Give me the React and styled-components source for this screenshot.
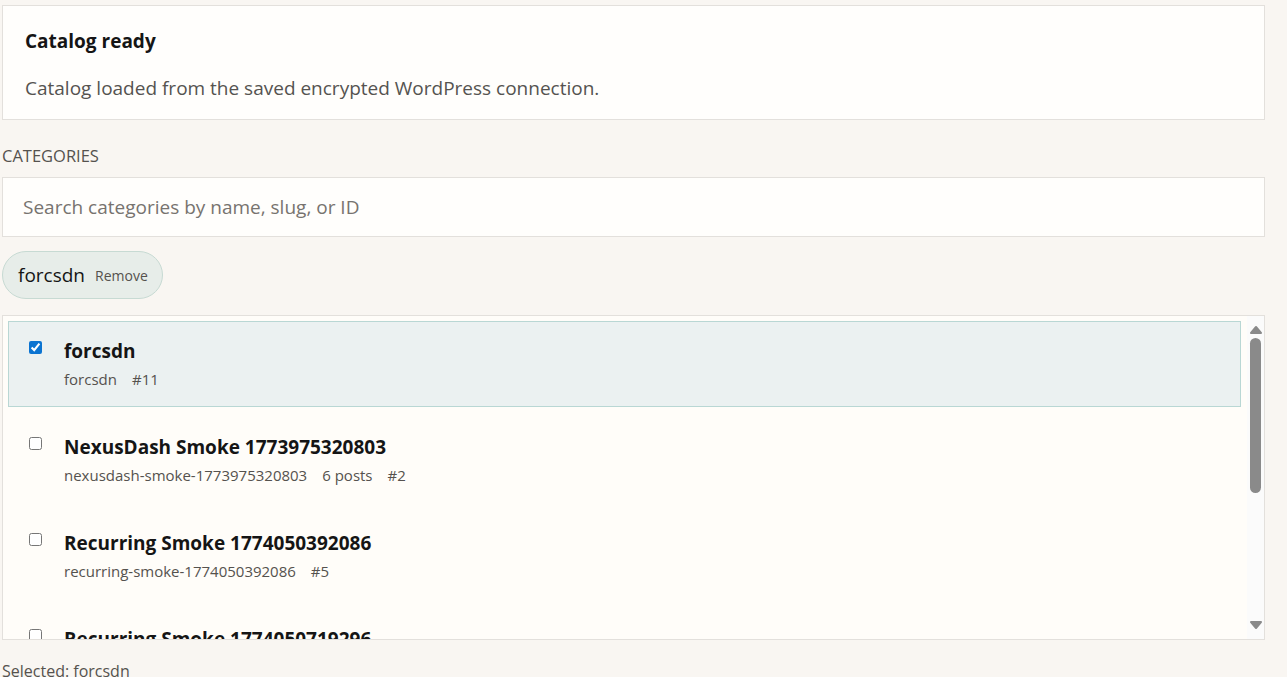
import React from "react";
import styled, { createGlobalStyle } from "styled-components";

const FONT = `"Segoe UI", "Open Sans", "Noto Sans", sans-serif`;

const Global = createGlobalStyle`
  html, body { margin: 0; padding: 0; background: #f9f6f2; }
  body { font-family: ${FONT}; color: #1b1b1b; }
  * { box-sizing: border-box; }
`;

const Page = styled.div`
  width: 1265px;
  padding: 5px 0 0 2px;
  display: flex;
  flex-direction: column;
`;

const StatusCard = styled.section`
  background: #fffefc;
  border: 1px solid #e3e0dc;
  padding: 23px 22px 19px;
  display: flex;
  flex-direction: column;
  gap: 23px;
`;

const CardTitle = styled.h2`
  margin: 0;
  font-size: 19px;
  font-weight: 700;
  line-height: 24px;
  color: #151515;
`;

const CardText = styled.p`
  margin: 0;
  font-size: 19px;
  line-height: 24px;
  color: #555350;
`;

const Field = styled.div`
  display: flex;
  flex-direction: column;
  margin-top: 25px;
`;

const Label = styled.label`
  font-size: 16.5px;
  line-height: 22px;
  color: #55524e;
  text-transform: uppercase;
`;

const SearchInput = styled.input`
  margin-top: 10px;
  height: 60px;
  border: 1px solid #e3e0dc;
  background: #fffefc;
  padding: 0 20px;
  font-family: ${FONT};
  font-size: 19px;
  color: #222;
  outline: none;
  &::placeholder { color: #77736f; }
`;

const ChipRow = styled.div`
  display: flex;
  gap: 8px;
  margin-top: 14px;
`;

const Chip = styled.span`
  display: inline-flex;
  align-items: center;
  gap: 10px;
  height: 48px;
  padding: 0 14px 0 15px;
  border-radius: 24px;
  background: #e7ede9;
  border: 1px solid #c7dad3;
`;

const ChipName = styled.span`
  font-size: 19px;
  color: #151515;
`;

const ChipRemove = styled.button`
  border: 0;
  background: none;
  padding: 0;
  font-family: ${FONT};
  font-size: 14px;
  color: #55524e;
  cursor: pointer;
`;

const ListBox = styled.div`
  margin-top: 16px;
  height: 325px;
  border: 1px solid #e3e0dc;
  background: #fffdf9;
  display: flex;
  overflow: hidden;
`;

const ListScroll = styled.div`
  flex: 1;
  min-width: 0;
  padding: 5px 6px 5px 5px;
  overflow: hidden;
  display: flex;
  flex-direction: column;
  gap: 10px;
`;

const ScrollBar = styled.div`
  flex: 0 0 17px;
  background: #fbfbfb;
  display: flex;
  flex-direction: column;
  align-items: center;
`;

const ScrollArrow = styled.div`
  flex: 0 0 20px;
  width: 17px;
  display: flex;
  align-items: ${(p) => (p.$down ? "flex-start" : "flex-end")};
  justify-content: center;
  padding: ${(p) => (p.$down ? "1px 0 0" : "0 0 1px")};
`;

const ScrollTrack = styled.div`
  flex: 1;
  width: 17px;
  display: flex;
  justify-content: center;
  padding-top: 2px;
`;

const ScrollThumb = styled.div`
  width: 11px;
  height: 155px;
  border-radius: 6px;
  background: #8a8a8a;
`;

const Row = styled.label`
  flex: 0 0 86px;
  display: flex;
  align-items: flex-start;
  gap: 22px;
  padding: 16px 20px;
  border: 1px solid ${(p) => (p.$selected ? "#b9d7d4" : "transparent")};
  background: ${(p) => (p.$selected ? "#ebf1f1" : "transparent")};
  cursor: pointer;
`;

const Check = styled.input`
  width: 13px;
  height: 13px;
  margin: 3px 0 0 0;
  accent-color: #0b74d1;
  flex: 0 0 auto;
`;

const RowBody = styled.div`
  display: flex;
  flex-direction: column;
  gap: 5px;
`;

const RowTitle = styled.span`
  font-size: 19px;
  font-weight: 700;
  line-height: 26px;
  color: #151515;
`;

const RowMeta = styled.span`
  display: flex;
  gap: 15px;
  font-size: 15px;
  line-height: 20px;
  color: #55524e;
`;

const SelectedNote = styled.div`
  margin-top: 21px;
  font-size: 16px;
  line-height: 20px;
  color: #55524e;
`;

const Arrow = ({ down }) => (
  <svg width="14" height="10" viewBox="0 0 14 10">
    <path
      d={down ? "M2 2 H12 L7 8 Z" : "M2 8 H12 L7 2 Z"}
      fill="#8a8a8a"
      stroke="#8a8a8a"
      strokeWidth="2"
      strokeLinejoin="round"
    />
  </svg>
);

const categories = [
  { name: "forcsdn", slug: "forcsdn", id: 11, selected: true },
  { name: "NexusDash Smoke 1773975320803", slug: "nexusdash-smoke-1773975320803", posts: 6, id: 2 },
  { name: "Recurring Smoke 1774050392086", slug: "recurring-smoke-1774050392086", id: 5 },
  { name: "Recurring Smoke 1774050719296", slug: "recurring-smoke-1774050719296", id: 6 },
  { name: "Uncategorized", slug: "uncategorized", posts: 3, id: 1 },
  { name: "Updates", slug: "updates", id: 7 },
];

export default function App() {
  return (
    <>
      <Global />
      <Page>
        <StatusCard>
          <CardTitle>Catalog ready</CardTitle>
          <CardText>Catalog loaded from the saved encrypted WordPress connection.</CardText>
        </StatusCard>
        <Field>
          <Label>Categories</Label>
          <SearchInput placeholder="Search categories by name, slug, or ID" />
          <ChipRow>
            <Chip>
              <ChipName>forcsdn</ChipName>
              <ChipRemove>Remove</ChipRemove>
            </Chip>
          </ChipRow>
          <ListBox>
            <ListScroll>
              {categories.map((c) => (
                <Row key={c.id} $selected={c.selected}>
                  <Check type="checkbox" defaultChecked={!!c.selected} />
                  <RowBody>
                    <RowTitle>{c.name}</RowTitle>
                    <RowMeta>
                      <span>{c.slug}</span>
                      {c.posts ? <span>{c.posts} posts</span> : null}
                      <span>#{c.id}</span>
                    </RowMeta>
                  </RowBody>
                </Row>
              ))}
            </ListScroll>
            <ScrollBar aria-hidden="true">
              <ScrollArrow>
                <Arrow />
              </ScrollArrow>
              <ScrollTrack>
                <ScrollThumb />
              </ScrollTrack>
              <ScrollArrow $down>
                <Arrow down />
              </ScrollArrow>
            </ScrollBar>
          </ListBox>
          <SelectedNote>Selected: forcsdn</SelectedNote>
        </Field>
      </Page>
    </>
  );
}
